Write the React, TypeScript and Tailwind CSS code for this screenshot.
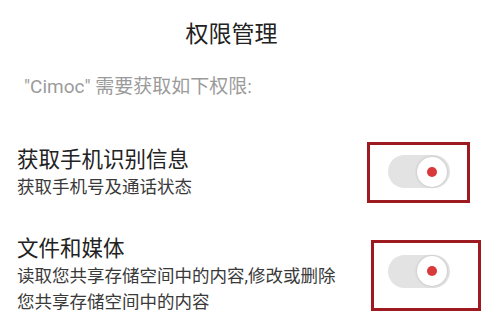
import React from "react";

const font = { fontFamily: '"Roboto", "Noto Sans CJK SC", sans-serif' };

function Toggle() {
  return (
    <div className="flex h-[33px] w-[62px] items-center justify-end rounded-full bg-[#e3e3e3] pr-[3px]">
      <div className="flex h-[30px] w-[30px] items-center justify-center rounded-full bg-white shadow-[0_0_3px_rgba(0,0,0,0.2)]">
        <div className="h-[10px] w-[10px] rounded-full bg-[#d8393b]" />
      </div>
    </div>
  );
}

export default function App() {
  return (
    <div
      className="h-[333px] w-[500px] overflow-hidden bg-white"
      style={font}
    >
      {/* Header */}
      <div className="flex justify-center pr-[37px] pt-[20px] text-[23px] leading-[30px] text-[#222]">
        权限管理
      </div>
      <div className="mt-[25px] pl-[24px] text-[19px] leading-[24px] text-[#9b9b9b]">
        "Cimoc" 需要获取如下权限:
      </div>

      {/* Permission 1 */}
      <div className="mt-[43px] flex items-center pl-[17px]">
        <div className="w-[350px]">
          <div className="text-[21.5px] leading-[28px] text-[#222]">获取手机识别信息</div>
          <div className="text-[17.5px] leading-[26px] text-[#3a3a3a]">获取手机号及通话状态</div>
        </div>
        <div className="border-[3px] border-[#9d1b20] pb-[12px] pl-[18px] pr-[17px] pt-[10px]">
          <Toggle />
        </div>
      </div>

      {/* Permission 2 */}
      <div className="mt-[32px] flex items-center pl-[17px]">
        <div className="w-[354px]">
          <div className="text-[21.5px] leading-[28px] text-[#222]">文件和媒体</div>
          <div className="text-[17.5px] leading-[26px] text-[#3a3a3a]">
            <div>读取您共享存储空间中的内容,修改或删除</div>
            <div>您共享存储空间中的内容</div>
          </div>
        </div>
        <div className="border-[3px] border-[#9d1b20] pb-[20px] pl-[14px] pr-[28px] pt-[12px]">
          <Toggle />
        </div>
      </div>
    </div>
  );
}
